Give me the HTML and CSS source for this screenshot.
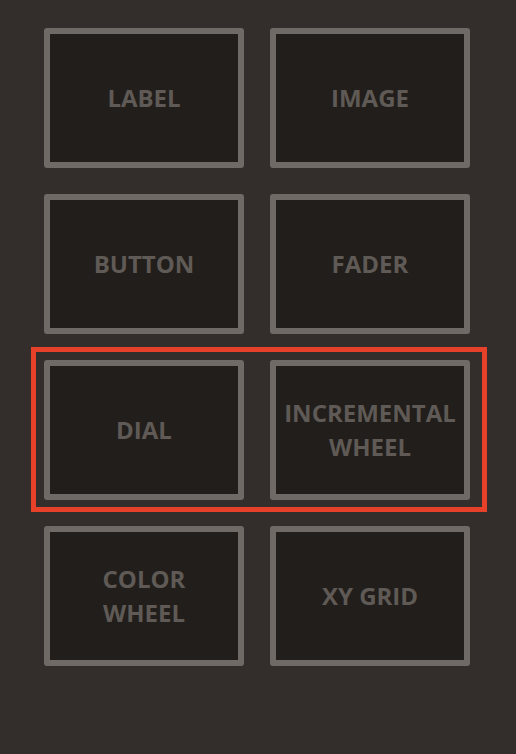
FILE: index.html
```html
<!DOCTYPE html>
<html>
<head>
<meta charset="utf-8">
<link rel="stylesheet" href="styles.css">
</head>
<body>
<div class="page">
  <div class="grid">
    <div class="tile"><span>LABEL</span></div>
    <div class="tile"><span>IMAGE</span></div>
    <div class="tile"><span>BUTTON</span></div>
    <div class="tile"><span>FADER</span></div>
    <div class="tile"><span>DIAL</span></div>
    <div class="tile"><span>INCREMENTAL<br>WHEEL</span></div>
    <div class="tile"><span>COLOR<br>WHEEL</span></div>
    <div class="tile"><span>XY GRID</span></div>
  </div>
  <div class="highlight"></div>
</div>
</body>
</html>
```
FILE: styles.css
```css
html, body {
  margin: 0;
  padding: 0;
  background: #332e2b;
}
.page {
  position: relative;
  width: 516px;
  height: 754px;
  box-sizing: border-box;
  padding: 28px 0 0 44px;
  font-family: "Open Sans", "Liberation Sans", sans-serif;
}
.grid {
  display: grid;
  grid-template-columns: 200px 200px;
  grid-auto-rows: 139.5px;
  column-gap: 26px;
  row-gap: 26.5px;
}
.tile {
  box-sizing: border-box;
  background: #221e1b;
  border: 6px solid #6f6a65;
  border-radius: 3px;
  display: flex;
  align-items: center;
  justify-content: center;
  text-align: center;
  color: #5f5a55;
  font-weight: 700;
  font-size: 24px;
  line-height: 34px;
}
.highlight {
  position: absolute;
  left: 31px;
  top: 347px;
  width: 456px;
  height: 165px;
  box-sizing: border-box;
  border: 5px solid #e8412a;
}
```
